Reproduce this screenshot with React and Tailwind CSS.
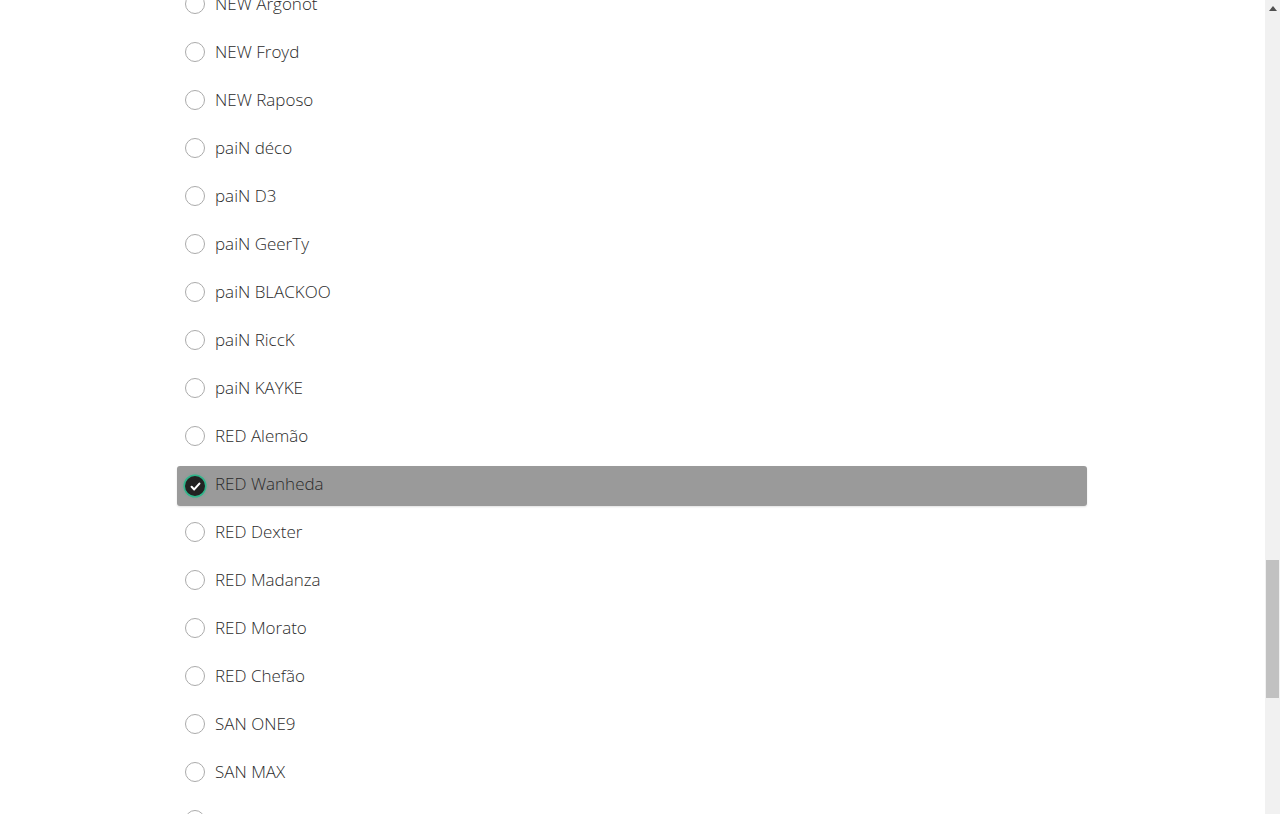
import React from 'react';

const players = [
  'NEW Argonot',
  'NEW Froyd',
  'NEW Raposo',
  'paiN déco',
  'paiN D3',
  'paiN GeerTy',
  'paiN BLACKOO',
  'paiN RiccK',
  'paiN KAYKE',
  'RED Alemão',
  'RED Wanheda',
  'RED Dexter',
  'RED Madanza',
  'RED Morato',
  'RED Chefão',
  'SAN ONE9',
  'SAN MAX',
  '',
];

const Radio = ({ checked }) =>
  checked ? (
    <span className="w-5 h-5 rounded-full bg-[#222] flex items-center justify-center shadow-[0_0_0_1.5px_#2fb58a,0_0_3px_1px_rgba(47,181,138,0.5)] shrink-0">
      <svg viewBox="0 0 20 20" className="w-[13px] h-[13px]" fill="none" stroke="#fff" strokeWidth="3.2" strokeLinecap="round" strokeLinejoin="round">
        <path d="M4 10.5l4 4 8-9" />
      </svg>
    </span>
  ) : (
    <span className="w-5 h-5 mb-1 rounded-full border-[1.5px] border-[#ababab] bg-white shrink-0"></span>
  );

export default function App() {
  const selected = 'RED Wanheda';

  return (
    <div className="h-[814px] w-[1280px] overflow-hidden flex bg-white" style={{ fontFamily: '"Open Sans", "Liberation Sans", sans-serif' }}>
      {/* Lista */}
      <div className="flex-1 pl-[177px] overflow-hidden">
        <div className="w-[910px] mt-[-14px] flex flex-col gap-2">
          {players.map((name, idx) => {
            const isSel = name === selected;
            return (
              <label
                key={idx}
                className={`h-10 flex items-center gap-[10px] px-2 rounded-[3px] ${isSel ? 'bg-[#9a9a9a] shadow-[0_1px_2px_rgba(0,0,0,0.12)]' : ''}`}
              >
                <Radio checked={isSel} />
                <span className="text-[17px] font-light text-[#2b2b2b] mb-1">{name}</span>
              </label>
            );
          })}
        </div>
      </div>

      {/* Scrollbar */}
      <div className="w-[15px] bg-[#f1f1f1] flex flex-col">
        <div className="h-[17px] flex items-center justify-center">
          <svg viewBox="0 0 10 6" className="w-[8px] h-[5px]" fill="#505050">
            <path d="M0 6L5 0l5 6z" />
          </svg>
        </div>
        <div className="mt-[543px] h-[138px] mx-[1px] bg-[#c1c1c1]"></div>
      </div>
    </div>
  );
}
